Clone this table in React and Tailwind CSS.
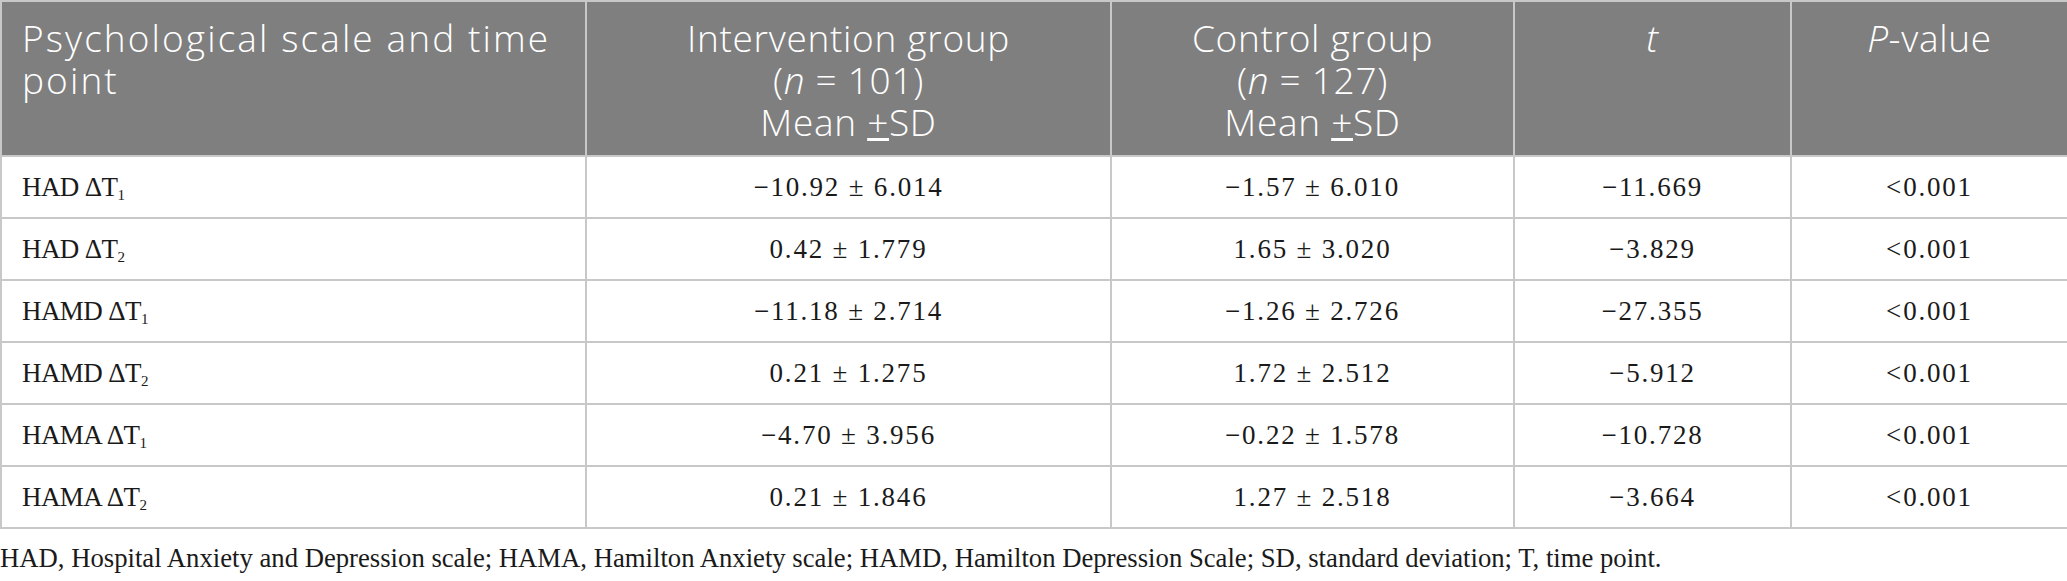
import React from "react";

const rows = [
  { scale: "HAD", sub: "1", a: "−10.92 ± 6.014", b: "−1.57 ± 6.010", t: "−11.669", p: "<0.001" },
  { scale: "HAD", sub: "2", a: "0.42 ± 1.779", b: "1.65 ± 3.020", t: "−3.829", p: "<0.001" },
  { scale: "HAMD", sub: "1", a: "−11.18 ± 2.714", b: "−1.26 ± 2.726", t: "−27.355", p: "<0.001" },
  { scale: "HAMD", sub: "2", a: "0.21 ± 1.275", b: "1.72 ± 2.512", t: "−5.912", p: "<0.001" },
  { scale: "HAMA", sub: "1", a: "−4.70 ± 3.956", b: "−0.22 ± 1.578", t: "−10.728", p: "<0.001" },
  { scale: "HAMA", sub: "2", a: "0.21 ± 1.846", b: "1.27 ± 2.518", t: "−3.664", p: "<0.001" },
];

const th = "border-2 border-[#c8c8c8] align-top pt-[15px] pb-2 font-light tracking-[0.7px]";
const td = "border-2 border-[#c8c8c8] h-[62px] p-0 text-center tracking-[1.8px]";

export default function App() {
  return (
    <div className="w-[2067px] bg-white text-[#1a1a1a]">
      <table className="w-[2067px] border-collapse table-fixed">
        <colgroup>
          <col className="w-[585px]" />
          <col className="w-[525px]" />
          <col className="w-[403px]" />
          <col className="w-[277px]" />
          <col className="w-[277px]" />
        </colgroup>
        <thead>
          <tr className="h-[155px] bg-[#7f7f7f] text-white text-[37px] leading-[42px] font-['Open_Sans',sans-serif]">
            <th className={`${th} text-left pl-[20px] tracking-[2.1px]`}>Psychological scale and time point</th>
            <th className={th}>
              Intervention group
              <br />(<i>n</i> = 101)
              <br />Mean <u>+</u>SD
            </th>
            <th className={th}>
              Control group
              <br />(<i>n</i> = 127)
              <br />Mean <u>+</u>SD
            </th>
            <th className={th}><i>t</i></th>
            <th className={th}><i>P</i>-value</th>
          </tr>
        </thead>
        <tbody className="font-['Liberation_Serif',serif] text-[27px]">
          {rows.map((r, i) => (
            <tr key={i}>
              <td className="border-2 border-[#c8c8c8] h-[62px] p-0 pl-[20px] text-left tracking-[-0.6px]">
                {r.scale} ΔT<sub className="text-[15px]">{r.sub}</sub>
              </td>
              <td className={td}>{r.a}</td>
              <td className={td}>{r.b}</td>
              <td className={td}>{r.t}</td>
              <td className={td}>{r.p}</td>
            </tr>
          ))}
        </tbody>
      </table>
      <p className="mt-[13px] font-['Liberation_Serif',serif] text-[26.7px] leading-[32px]">
        HAD, Hospital Anxiety and Depression scale; HAMA, Hamilton Anxiety scale; HAMD, Hamilton Depression Scale; SD, standard deviation; T, time point.
      </p>
    </div>
  );
}
